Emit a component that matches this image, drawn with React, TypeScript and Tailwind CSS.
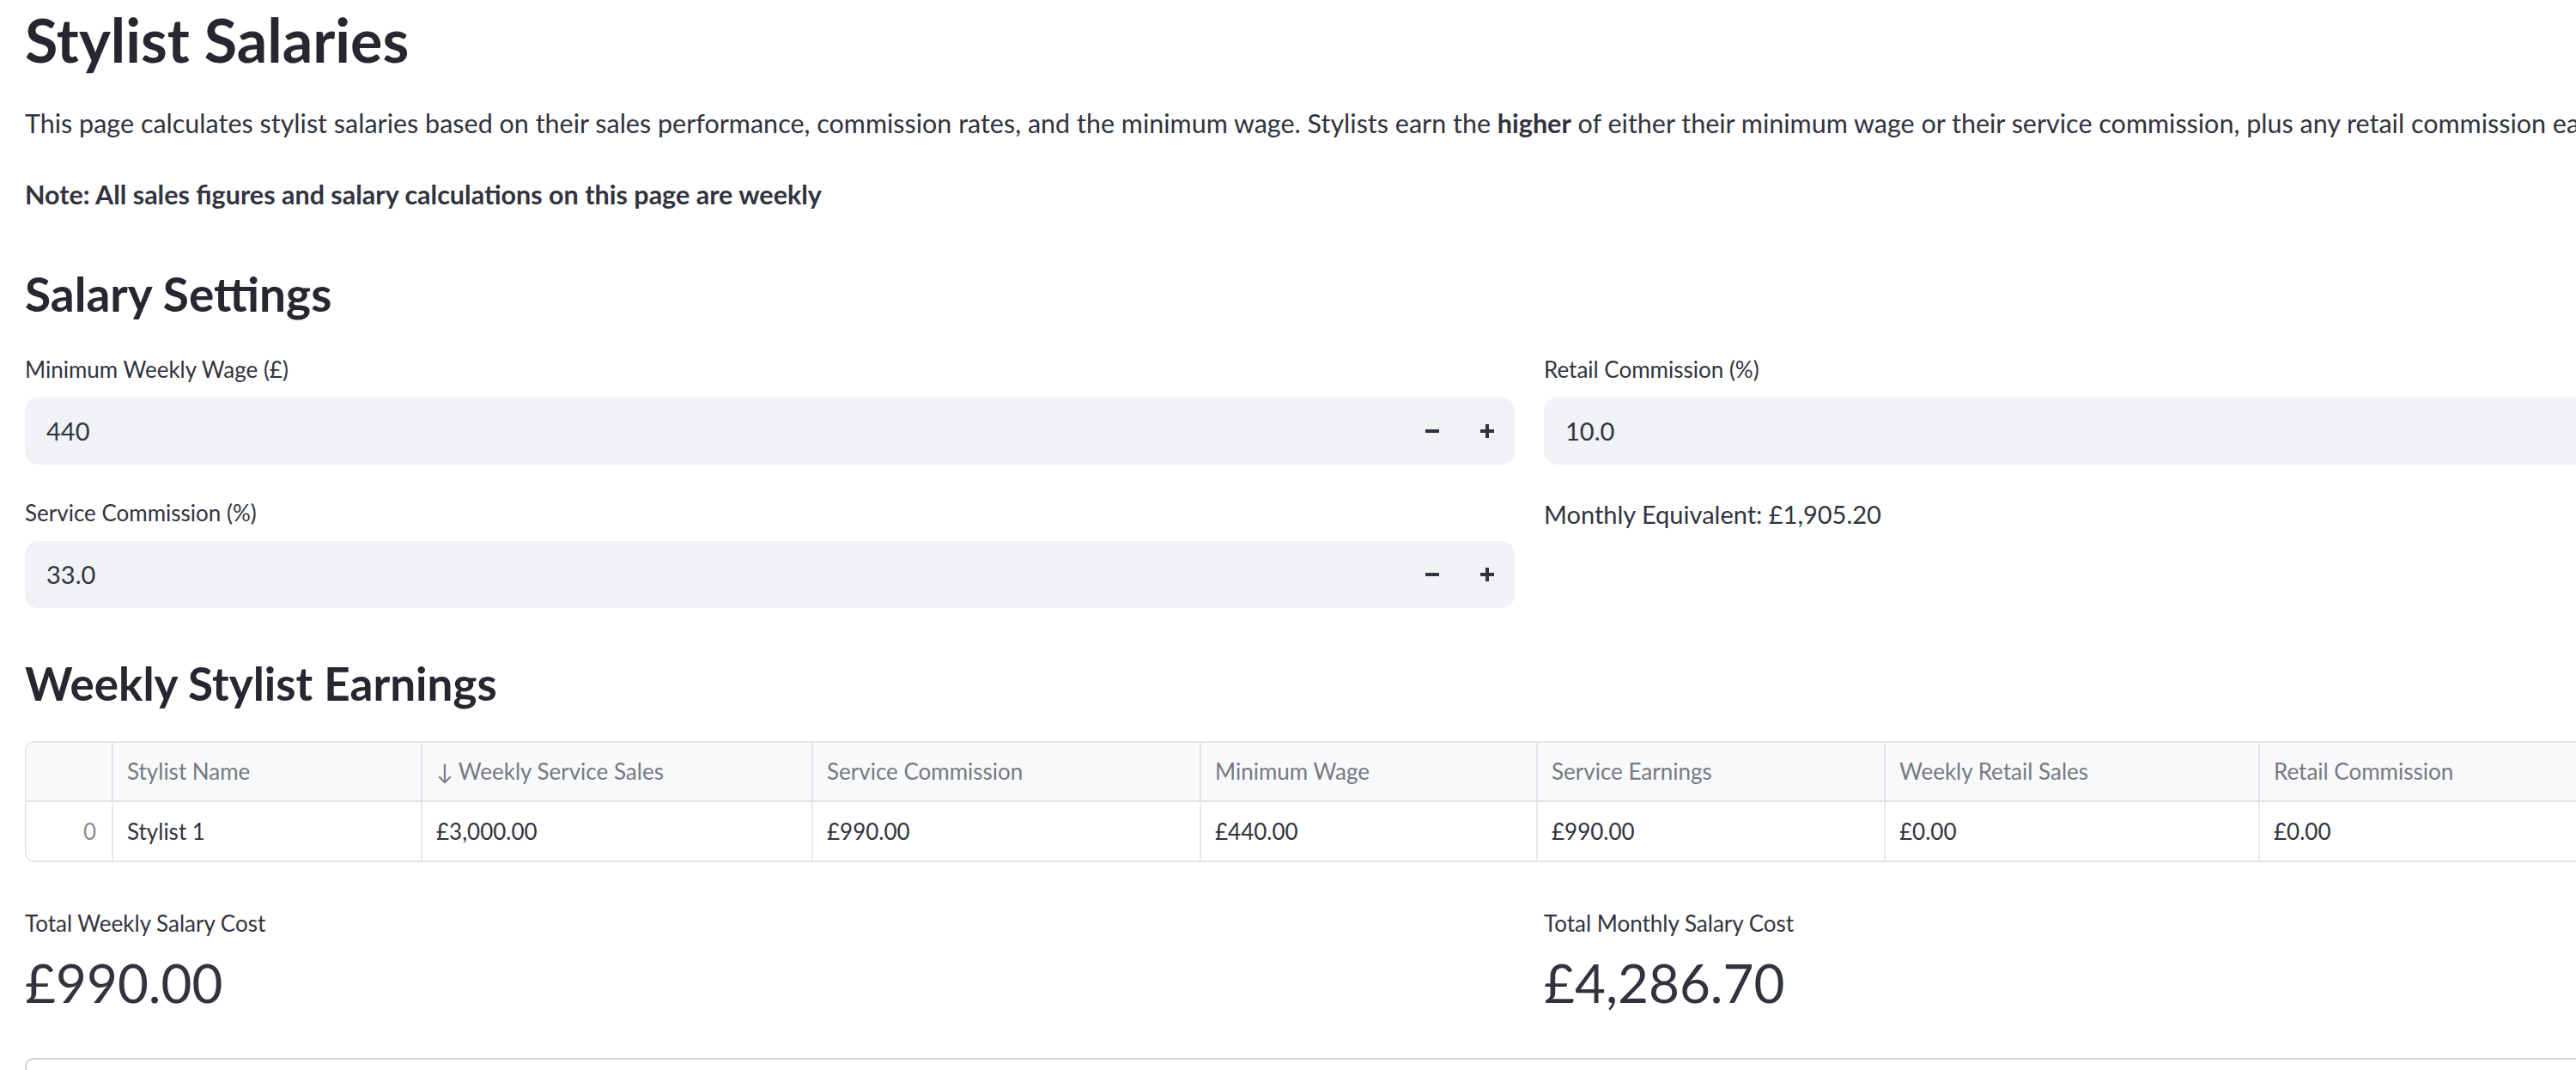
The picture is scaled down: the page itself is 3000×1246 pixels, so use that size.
import React from 'react';

const font = { fontFamily: 'Lato, "Noto Sans", sans-serif' };

function MinusIcon() {
  return (
    <svg width='18' height='18' viewBox='0 0 18 18'>
      <rect x='1' y='7' width='16' height='4' fill='#31333f' />
    </svg>
  );
}

function PlusIcon() {
  return (
    <svg width='18' height='18' viewBox='0 0 18 18'>
      <rect x='1' y='7' width='16' height='4' fill='#31333f' />
      <rect x='7' y='1' width='4' height='16' fill='#31333f' />
    </svg>
  );
}

function NumberInput({ label, value }: { label: string; value: string }) {
  return (
    <div className='flex flex-col'>
      <div className='h-[30px] text-[26px] leading-[30px] text-[#31333f]'>{label}</div>
      <div className='mt-[18px] flex h-[78px] items-center rounded-[15px] bg-[#f0f2f6]'>
        <span className='flex-1 pl-[25px] text-[29px] text-[#31333f]'>{value}</span>
        <button className='flex h-full w-[64px] items-center justify-center'>
          <MinusIcon />
        </button>
        <button className='flex h-full w-[64px] items-center justify-center rounded-r-[15px]'>
          <PlusIcon />
        </button>
      </div>
    </div>
  );
}

const columns = [
  'Stylist Name',
  '↓ Weekly Service Sales',
  'Service Commission',
  'Minimum Wage',
  'Service Earnings',
  'Weekly Retail Sales',
  'Retail Commission',
  'Total Earnings',
];

const row = ['Stylist 1', '£3,000.00', '£990.00', '£440.00', '£990.00', '£0.00', '£0.00', '£990.00'];

function EarningsTable() {
  return (
    <div className='overflow-hidden rounded-[10px] border-2 border-[#e6e7ea]'>
      <div className='grid grid-cols-[99px_360px_455px_452px_392px_405px_436px_440px_1fr]'>
        <div className='h-[69px] border-b-2 border-[#e2e3e7] bg-[#f8f9fb]' />
        {columns.map((c) => (
          <div
            key={c}
            className='flex h-[69px] items-center whitespace-nowrap border-b-2 border-l-2 border-[#e2e3e7] bg-[#f8f9fb] px-[16px] text-[26px] text-[#777983]'
          >
            {c}
          </div>
        ))}
        <div className='flex h-[68px] items-center justify-end px-[18px] text-[26px] text-[#8a8c94]'>0</div>
        {row.map((v, i) => (
          <div
            key={i}
            className='flex h-[68px] items-center border-l-2 border-[#e8e9ec] px-[16px] text-[26px] text-[#31333f]'
          >
            {v}
          </div>
        ))}
      </div>
    </div>
  );
}

export default function App() {
  return (
    <div className='h-[1246px] w-full overflow-hidden bg-white' style={font}>
      <div className='w-[3562px] px-[29px] text-[#31333f]'>
        <h1 className='h-[92px] text-[70px] font-bold leading-[92px] text-[#262730]'>Stylist Salaries</h1>

        <p className='mt-[31px] h-[40px] text-[30.5px] leading-[40px] whitespace-nowrap'>
          This page calculates stylist salaries based on their sales performance, commission rates, and the minimum
          wage. Stylists earn the <b>higher</b> of either their minimum wage or their service commission, plus any retail
          commission earned.
        </p>

        <p className='mt-[43px] h-[40px] text-[30.5px] font-bold leading-[40px]'>
          Note: All sales figures and salary calculations on this page are weekly
        </p>

        <h2 className='mt-[56px] h-[80px] text-[55px] font-bold leading-[80px] text-[#262730]'>Salary Settings</h2>

        <div className='mt-[33px] grid grid-cols-2 gap-x-[34px]'>
          <NumberInput label='Minimum Weekly Wage (£)' value='440' />
          <NumberInput label='Retail Commission (%)' value='10.0' />
          <div className='mt-[41px]'>
            <NumberInput label='Service Commission (%)' value='33.0' />
          </div>
          <div className='mt-[41px]'>
            <div className='h-[34px] text-[29px] leading-[34px]'>Monthly Equivalent: £1,905.20</div>
          </div>
        </div>

        <h2 className='mt-[48px] h-[80px] text-[53px] font-bold leading-[80px] text-[#262730]'>
          Weekly Stylist Earnings
        </h2>

        <div className='mt-[27px]'>
          <EarningsTable />
        </div>

        <div className='mt-[56px] grid grid-cols-2 gap-x-[34px]'>
          <div>
            <div className='h-[30px] text-[26px] leading-[30px]'>Total Weekly Salary Cost</div>
            <div className='mt-[14px] h-[80px] text-[62px] leading-[80px]'>£990.00</div>
          </div>
          <div>
            <div className='h-[30px] text-[26px] leading-[30px]'>Total Monthly Salary Cost</div>
            <div className='mt-[14px] h-[80px] text-[62px] leading-[80px]'>£4,286.70</div>
          </div>
        </div>

        <div className='mt-[48px] h-[120px] rounded-[10px] border-2 border-[#d2d3d6]' />
      </div>
    </div>
  );
}
